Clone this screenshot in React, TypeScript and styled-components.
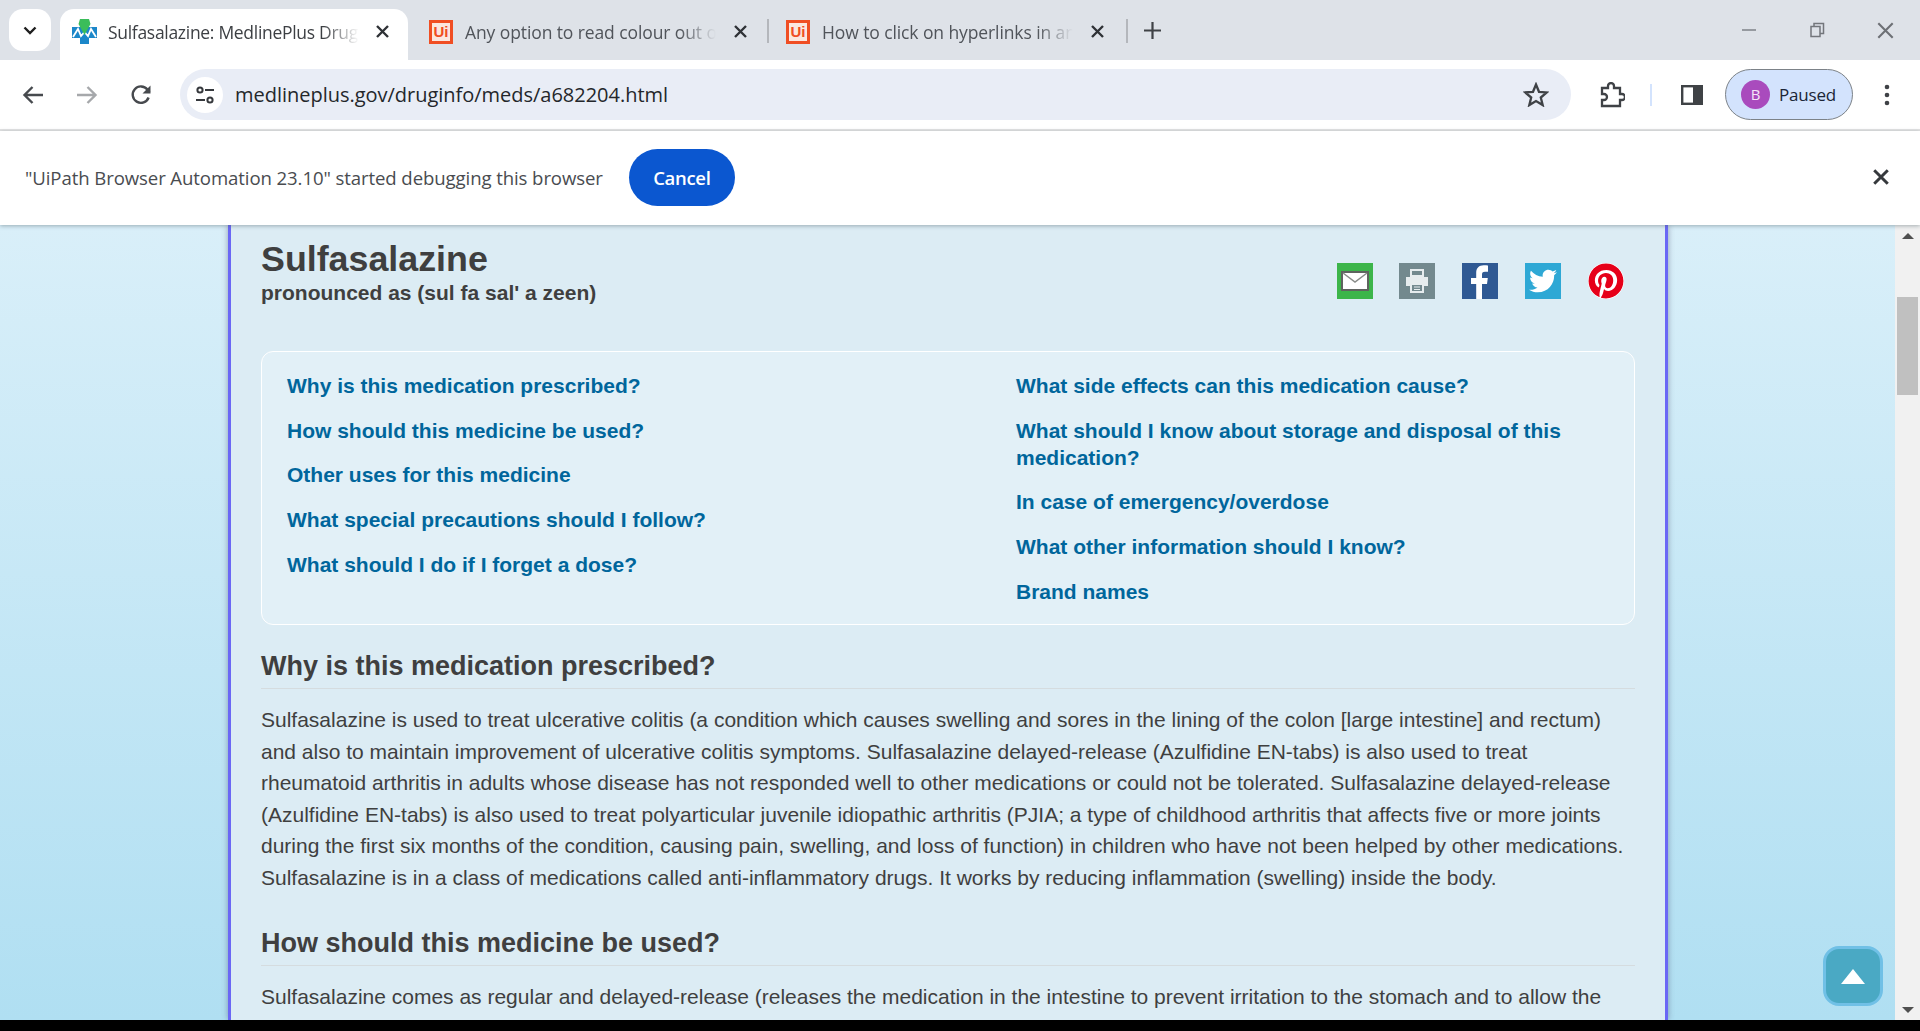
import React from 'react';
import styled, { createGlobalStyle } from 'styled-components';
import { FaTwitter, FaPinterest } from 'react-icons/fa';

const chromeFont = '"Open Sans", "Noto Sans", sans-serif';
const pageFont = '"Liberation Sans", Arial, sans-serif';

const GlobalStyle = createGlobalStyle`
    html, body {
        margin: 0;
        padding: 0;
        height: 100%;
        overflow: hidden;
        background: #000;
    }
    * {
        box-sizing: border-box;
    }
`;

const Screen = styled.div`
    width: 1920px;
    height: 1020px;
    display: flex;
    flex-direction: column;
    overflow: hidden;
`;

const TabStrip = styled.div`
    height: 60px;
    flex: none;
    display: flex;
    align-items: flex-end;
    background: #dee2e8;
    padding-left: 9px;
    position: relative;
`;

const TabSearch = styled.div`
    width: 42px;
    height: 42px;
    align-self: flex-start;
    margin-top: 9px;
    margin-right: 9px;
    background: #fff;
    border-radius: 14px;
    display: flex;
    align-items: center;
    justify-content: center;
`;

const Tab = styled.div<{ $active?: boolean; $width: number; $inset: number }>`
    width: ${p => p.$width}px;
    height: 51px;
    flex: none;
    display: flex;
    align-items: center;
    padding: 0 0 6px ${p => p.$inset}px;
    border-radius: 14px 14px 0 0;
    background: ${p => (p.$active ? '#fff' : 'transparent')};
`;

const TabTitle = styled.span<{ $active?: boolean }>`
    width: 256px;
    margin-left: ${p => (p.$active ? 11 : 12)}px;
    font: 400 17.5px ${chromeFont};
    letter-spacing: ${p => (p.$active ? -0.3 : -0.1)}px;
    color: ${p => (p.$active ? '#3c3f43' : '#50545a')};
    white-space: nowrap;
    overflow: hidden;
    mask-image: linear-gradient(to right, #000 84%, transparent 98%);
`;

const TabClose = styled.span<{ $active?: boolean }>`
    margin-left: ${p => (p.$active ? 12 : 13)}px;
    display: flex;
`;

const TabDivider = styled.span`
    width: 2px;
    height: 24px;
    flex: none;
    margin-bottom: 17px;
    background: #b4b7bc;
`;

const NewTab = styled.span`
    margin: 0 0 21px 16px;
    display: flex;
`;

const WindowControls = styled.div`
    margin-left: auto;
    align-self: flex-start;
    display: flex;
    align-items: center;
    height: 60px;
    gap: 52px;
    padding-right: 26px;
`;

const UiBadge = styled.span`
    width: 24px;
    height: 24px;
    flex: none;
    border: 3px solid #f04e23;
    background: #fbe7df;
    color: #f04e23;
    font: 700 15px/18px ${pageFont};
    text-align: center;
`;

const Toolbar = styled.div`
    height: 71px;
    flex: none;
    display: flex;
    align-items: center;
    background: #fff;
    border-bottom: 2px solid #e4e4e4;
    padding: 1px 0;
    position: relative;
`;

const NavIcon = styled.span<{ $width: number; $gap?: number; $shift?: number }>`
    width: ${p => p.$width}px;
    margin-left: ${p => p.$gap ?? 0}px;
    padding-left: ${p => p.$shift ?? 0}px;
    display: flex;
    justify-content: center;
    flex: none;
`;

const Omnibox = styled.div`
    width: 1391px;
    height: 51px;
    flex: none;
    display: flex;
    align-items: center;
    margin-left: 5px;
    padding: 0 22px 0 7px;
    border-radius: 26px;
    background: #e9edf6;
`;

const TuneChip = styled.span`
    width: 36px;
    height: 36px;
    flex: none;
    border-radius: 50%;
    background: #fff;
    display: flex;
    align-items: center;
    justify-content: center;
`;

const Url = styled.span`
    margin-left: 12px;
    font: 400 20px ${chromeFont};
    letter-spacing: -0.02px;
    color: #24272b;
`;

const OmniStar = styled.span`
    margin-left: auto;
    display: flex;
`;

const ToolSeparator = styled.span`
    width: 2px;
    height: 22px;
    flex: none;
    margin-left: 5px;
    background: #d3e3fd;
`;

const ProfilePill = styled.div`
    width: 128px;
    height: 51px;
    flex: none;
    display: flex;
    align-items: center;
    padding-left: 15px;
    border-radius: 26px;
    border: 1.5px solid #7c8288;
    background: #d3e3fd;
`;

const Avatar = styled.span`
    width: 29px;
    height: 29px;
    flex: none;
    border-radius: 50%;
    background: #a94bbd;
    color: #f5e6f8;
    font: 400 15px/29px ${chromeFont};
    text-align: center;
`;

const PausedLabel = styled.span`
    margin-left: 9px;
    font: 400 17px ${chromeFont};
    letter-spacing: -0.2px;
    color: #1a2536;
`;

const InfoBar = styled.div`
    height: 94px;
    flex: none;
    display: flex;
    align-items: center;
    padding: 0 31px 2px 25px;
    background: #fff;
    position: relative;
    z-index: 2;
    box-shadow: 0 1px 4px rgba(70, 90, 100, 0.45);
`;

const InfoText = styled.span`
    font: 400 18.6px ${chromeFont};
    letter-spacing: -0.1px;
    color: #494c50;
`;

const CancelButton = styled.button`
    width: 106px;
    height: 57px;
    margin-left: 26px;
    border: none;
    border-radius: 29px;
    background: #0b57d0;
    color: #fff;
    font: 600 18.5px ${chromeFont};
    letter-spacing: -0.3px;
`;

const InfoClose = styled.span`
    margin-left: auto;
    display: flex;
`;

const Viewport = styled.div`
    flex: 1;
    min-height: 0;
    display: flex;
    position: relative;
`;

const PageBackground = styled.div`
    flex: 1;
    min-width: 0;
    overflow: hidden;
    background: linear-gradient(to bottom, #d9eff9, #b0dff2);
    padding-left: 228px;
`;

const Panel = styled.main`
    width: 1440px;
    height: 100%;
    padding: 15px 30px 0 30px;
    font-family: ${pageFont};
    color: #3f3f3f;
    background: #dcecf4;
    border-left: 3px solid #6a67f5;
    border-right: 3px solid #6a67f5;
    box-shadow: 0 0 6px rgba(60, 60, 90, 0.45);
`;

const TitleRow = styled.div`
    display: flex;
    justify-content: space-between;
    height: 111px;
`;

const Title = styled.h1`
    margin: 1px 0 0 0;
    font-size: 35.8px;
    line-height: 36px;
    font-weight: 700;
`;

const Pronounced = styled.div`
    margin-top: 3px;
    font-size: 21px;
    line-height: 26px;
    font-weight: 700;
`;

const ShareRow = styled.div`
    display: flex;
    gap: 27px;
    padding: 23px 11px 0 0;
`;

const ShareIcon = styled.span<{ $bg: string; $round?: boolean }>`
    width: 36px;
    height: 36px;
    display: flex;
    align-items: center;
    justify-content: center;
    overflow: hidden;
    background: ${p => p.$bg};
    border-radius: ${p => (p.$round ? '50%' : '0')};

    &:first-child {
        margin-right: -1px;
    }
`;

const TocBox = styled.nav`
    height: 274px;
    display: grid;
    grid-template-columns: 729px 1fr;
    padding: 20px 50px 0 25px;
    border: 1px solid #fff;
    border-radius: 12px;
    background: #e2f0f7;
`;

const TocColumn = styled.div`
    display: flex;
    flex-direction: column;
    gap: 17.7px;
`;

const TocLink = styled.a`
    display: block;
    font-size: 21px;
    line-height: 27px;
    font-weight: 700;
    color: #00669c;
`;

const SectionTitle = styled.h2<{ $top: number }>`
    margin: ${p => p.$top}px 0 0 0;
    height: 48px;
    font-size: 27px;
    line-height: 50px;
    font-weight: 700;
    border-bottom: 1px solid #d5dcdf;
`;

const BodyText = styled.div`
    margin: 15px 0 0 0;
    font-size: 21px;
    line-height: 31.6px;
    white-space: nowrap;
`;

const ScrollTop = styled.div`
    position: absolute;
    left: 1823px;
    bottom: 14px;
    width: 60px;
    height: 60px;
    border: 3px solid #70c0e6;
    border-radius: 16px;
    background: #4aa9c4;
    display: flex;
    align-items: center;
    justify-content: center;
`;

const ScrollArrow = styled.span`
    width: 0;
    height: 0;
    border-left: 12px solid transparent;
    border-right: 12px solid transparent;
    border-bottom: 15px solid #fff;
`;

const Scrollbar = styled.div`
    width: 25px;
    flex: none;
    display: flex;
    flex-direction: column;
    align-items: center;
    justify-content: space-between;
    padding: 8px 0 7px;
    background: #f1f1f1;
    position: relative;
`;

const ScrollThumb = styled.span`
    position: absolute;
    top: 72px;
    left: 2px;
    width: 21px;
    height: 98px;
    background: #c0c0c0;
`;

const ArrowGlyph = styled.span<{ $up?: boolean }>`
    width: 0;
    height: 0;
    border-left: 6px solid transparent;
    border-right: 6px solid transparent;
    ${p => (p.$up ? 'border-bottom: 6px solid #505050;' : 'border-top: 6px solid #505050;')}
`;

const CloseIcon: React.FC<{ size?: number; color?: string; weight?: number }> = ({
    size = 13,
    color = '#2f3236',
    weight = 2.4,
}) => (
    <svg width={size} height={size} viewBox="0 0 13 13">
        <path d="M1 1L12 12M12 1L1 12" stroke={color} strokeWidth={weight} fill="none" />
    </svg>
);

const MedlineIcon: React.FC = () => (
    <svg width="25" height="25" viewBox="0 0 25 25" style={{ flex: 'none' }}>
        <path d="M0 8h25v11h-8v6H8v-6H0z" fill="#1c87c9" />
        <path d="M1 18l5-8 3 7 3.500-4 3.500 4 3-7 5 8" stroke="#fff" strokeWidth="1.800" fill="none" />
        <path d="M8 0h9l1.500 5-6 11-6-11z" fill="#3bbd5a" />
    </svg>
);

const toc1 = [
    'Why is this medication prescribed?',
    'How should this medicine be used?',
    'Other uses for this medicine',
    'What special precautions should I follow?',
    'What should I do if I forget a dose?',
];

const toc2 = [
    'What side effects can this medication cause?',
    'What should I know about storage and disposal of this medication?',
    'In case of emergency/overdose',
    'What other information should I know?',
    'Brand names',
];

const paragraph = [
    'Sulfasalazine is used to treat ulcerative colitis (a condition which causes swelling and sores in the lining of the colon [large intestine] and rectum)',
    'and also to maintain improvement of ulcerative colitis symptoms. Sulfasalazine delayed-release (Azulfidine EN-tabs) is also used to treat',
    'rheumatoid arthritis in adults whose disease has not responded well to other medications or could not be tolerated. Sulfasalazine delayed-release',
    '(Azulfidine EN-tabs) is also used to treat polyarticular juvenile idiopathic arthritis (PJIA; a type of childhood arthritis that affects five or more joints',
    'during the first six months of the condition, causing pain, swelling, and loss of function) in children who have not been helped by other medications.',
    'Sulfasalazine is in a class of medications called anti-inflammatory drugs. It works by reducing inflammation (swelling) inside the body.',
];

const App: React.FC = () => (
    <Screen>
        <GlobalStyle />
        <TabStrip>
            <TabSearch>
                <svg width="14" height="9" viewBox="0 0 14 9">
                    <path d="M1.5 1.5L7 7l5.5-5.5" stroke="#1f1f1f" strokeWidth="2.4" fill="none" />
                </svg>
            </TabSearch>
            <Tab $active $width={348} $inset={12}>
                <MedlineIcon />
                <TabTitle $active>Sulfasalazine: MedlinePlus Drug</TabTitle>
                <TabClose $active>
                    <CloseIcon />
                </TabClose>
            </Tab>
            <Tab $width={359} $inset={21}>
                <UiBadge>Ui</UiBadge>
                <TabTitle>Any option to read colour out o</TabTitle>
                <TabClose>
                    <CloseIcon />
                </TabClose>
            </Tab>
            <TabDivider />
            <Tab $width={357} $inset={17}>
                <UiBadge>Ui</UiBadge>
                <TabTitle>How to click on hyperlinks in an</TabTitle>
                <TabClose>
                    <CloseIcon />
                </TabClose>
            </Tab>
            <TabDivider />
            <NewTab>
                <svg width="17" height="17" viewBox="0 0 17 17">
                    <path d="M8.5 0v17M0 8.5h17" stroke="#3f4246" strokeWidth="2.2" />
                </svg>
            </NewTab>
            <WindowControls>
                <svg width="16" height="16" viewBox="0 0 16 16">
                    <path d="M1 8h14" stroke="#85888d" strokeWidth="1.6" />
                </svg>
                <svg width="16" height="16" viewBox="0 0 16 16">
                    <path d="M2 4.5h9v10H2zM5 4.5V1.500h9.500v10H11" stroke="#73767b" strokeWidth="1.5" fill="none" />
                </svg>
                <CloseIcon size={17} color="#6d7075" weight={1.6} />
            </WindowControls>
        </TabStrip>
        <Toolbar>
            <NavIcon $width={66}>
                <svg width="22" height="20" viewBox="0 0 22 20">
                    <path d="M21 10H3M10.5 2L2.5 10l8 8" stroke="#474a4e" strokeWidth="2.4" fill="none" />
                </svg>
            </NavIcon>
            <NavIcon $width={41}>
                <svg width="22" height="20" viewBox="0 0 22 20">
                    <path d="M1 10h18M11.5 2l8 8-8 8" stroke="#a6a8ab" strokeWidth="2.4" fill="none" />
                </svg>
            </NavIcon>
            <NavIcon $width={68}>
                <svg width="22" height="22" viewBox="0 0 22 22">
                    <path
                        d="M18.6 13.500A8.200 8.200 0 1 1 17.400 5.600L19.500 8"
                        stroke="#474a4e"
                        strokeWidth="2.4"
                        fill="none"
                    />
                    <path d="M20.500 1.500v8h-8z" fill="#474a4e" />
                </svg>
            </NavIcon>
            <Omnibox>
                <TuneChip>
                    <svg width="20" height="20" viewBox="0 0 20 20">
                        <circle cx="5" cy="5" r="2.6" stroke="#35383c" strokeWidth="2" fill="none" />
                        <path d="M10 5h9M1 15h9" stroke="#35383c" strokeWidth="2.2" />
                        <circle cx="15" cy="15" r="2.6" stroke="#35383c" strokeWidth="2" fill="none" />
                    </svg>
                </TuneChip>
                <Url>medlineplus.gov/druginfo/meds/a682204.html</Url>
                <OmniStar>
                    <svg width="26" height="25" viewBox="0 0 26 25">
                        <path
                            d="M13 2.500l3 7.300 7.800.6-6 5.100 1.900 7.600L13 19l-6.700 4.100 1.900-7.600-6-5.100 7.800-.6z"
                            stroke="#3f4246"
                            strokeWidth="2.3"
                            fill="none"
                        />
                    </svg>
                </OmniStar>
            </Omnibox>
            <NavIcon $width={66} $gap={8}>
                <svg width="26" height="26" viewBox="0 0 26 26">
                    <path
                        d="M3 6h6V4a3 3 0 0 1 6 0v2h6v6h2a3 3 0 0 1 0 6h-2v6H3v-6h2a3 3 0 0 0 0-6H3z"
                        stroke="#3f4246"
                        strokeWidth="2.3"
                        fill="none"
                    />
                </svg>
            </NavIcon>
            <ToolSeparator />
            <NavIcon $width={73} $shift={7}>
                <svg width="22" height="20" viewBox="0 0 22 20">
                    <path d="M0 0h22v20H0z" fill="#3f4246" />
                    <path d="M2.400 2.400h9.600v15.200H2.400z" fill="#fff" />
                </svg>
            </NavIcon>
            <ProfilePill>
                <Avatar>B</Avatar>
                <PausedLabel>Paused</PausedLabel>
            </ProfilePill>
            <NavIcon $width={67}>
                <svg width="6" height="22" viewBox="0 0 6 22">
                    <circle cx="3" cy="3" r="2.3" fill="#3f4246" />
                    <circle cx="3" cy="11" r="2.3" fill="#3f4246" />
                    <circle cx="3" cy="19" r="2.3" fill="#3f4246" />
                </svg>
            </NavIcon>
        </Toolbar>
        <InfoBar>
            <InfoText>"UiPath Browser Automation 23.10" started debugging this browser</InfoText>
            <CancelButton>Cancel</CancelButton>
            <InfoClose>
                <CloseIcon size={16} color="#36393d" weight={2.4} />
            </InfoClose>
        </InfoBar>
        <Viewport>
            <PageBackground>
                <Panel>
                    <TitleRow>
                        <div>
                            <Title>Sulfasalazine</Title>
                            <Pronounced>pronounced as (sul fa sal' a zeen)</Pronounced>
                        </div>
                        <ShareRow>
                            <ShareIcon $bg="#3cb54a">
                                <svg width="28" height="20" viewBox="0 0 28 20">
                                    <rect x="1" y="1" width="26" height="18" fill="#fff" stroke="#5f635f" strokeWidth="2" />
                                    <path d="M2 2l12 9L26 2" stroke="#8a8d8a" strokeWidth="1.500" fill="none" />
                                </svg>
                            </ShareIcon>
                            <ShareIcon $bg="#73898e">
                                <svg width="24" height="24" viewBox="0 0 24 24">
                                    <path d="M6 1h12v6H6z" fill="none" stroke="#e6ecee" strokeWidth="2" />
                                    <path d="M1 8h22v9h-4v-3H5v3H1z" fill="#e6ecee" />
                                    <path d="M6 15h12v8H6z" fill="none" stroke="#e6ecee" strokeWidth="2" />
                                    <path d="M9 18h6M9 20.500h6" stroke="#e6ecee" strokeWidth="1.2" />
                                </svg>
                            </ShareIcon>
                            <ShareIcon $bg="#2f5993">
                                <svg width="36" height="36" viewBox="0 0 36 36">
                                    <path
                                        d="M20 36V21h5l.8-6H20v-3.400c0-1.700.5-2.900 3-2.900h3V2.500c-.6-.1-2.400-.3-4.400-.3-4.400 0-7.400 2.700-7.400 7.600V15H9v6h5.200v15z"
                                        fill="#fff"
                                    />
                                </svg>
                            </ShareIcon>
                            <ShareIcon $bg="#2ea8d5">
                                <FaTwitter size={28} color="#fff" />
                            </ShareIcon>
                            <ShareIcon $bg="#fff" $round>
                                <FaPinterest size={36} color="#e60019" />
                            </ShareIcon>
                        </ShareRow>
                    </TitleRow>
                    <TocBox>
                        <TocColumn>
                            {toc1.map(t => (
                                <TocLink key={t}>{t}</TocLink>
                            ))}
                        </TocColumn>
                        <TocColumn>
                            {toc2.map(t => (
                                <TocLink key={t}>{t}</TocLink>
                            ))}
                        </TocColumn>
                    </TocBox>
                    <SectionTitle $top={16}>Why is this medication prescribed?</SectionTitle>
                    <BodyText>
                        {paragraph.map(l => (
                            <div key={l}>{l}</div>
                        ))}
                    </BodyText>
                    <SectionTitle $top={24}>How should this medicine be used?</SectionTitle>
                    <BodyText>
                        Sulfasalazine comes as regular and delayed-release (releases the medication in the intestine to prevent irritation to the stomach and to allow the
                    </BodyText>
                </Panel>
            </PageBackground>
            <ScrollTop>
                <ScrollArrow />
            </ScrollTop>
            <Scrollbar>
                <ArrowGlyph $up />
                <ScrollThumb />
                <ArrowGlyph />
            </Scrollbar>
        </Viewport>
    </Screen>
);

export default App;
